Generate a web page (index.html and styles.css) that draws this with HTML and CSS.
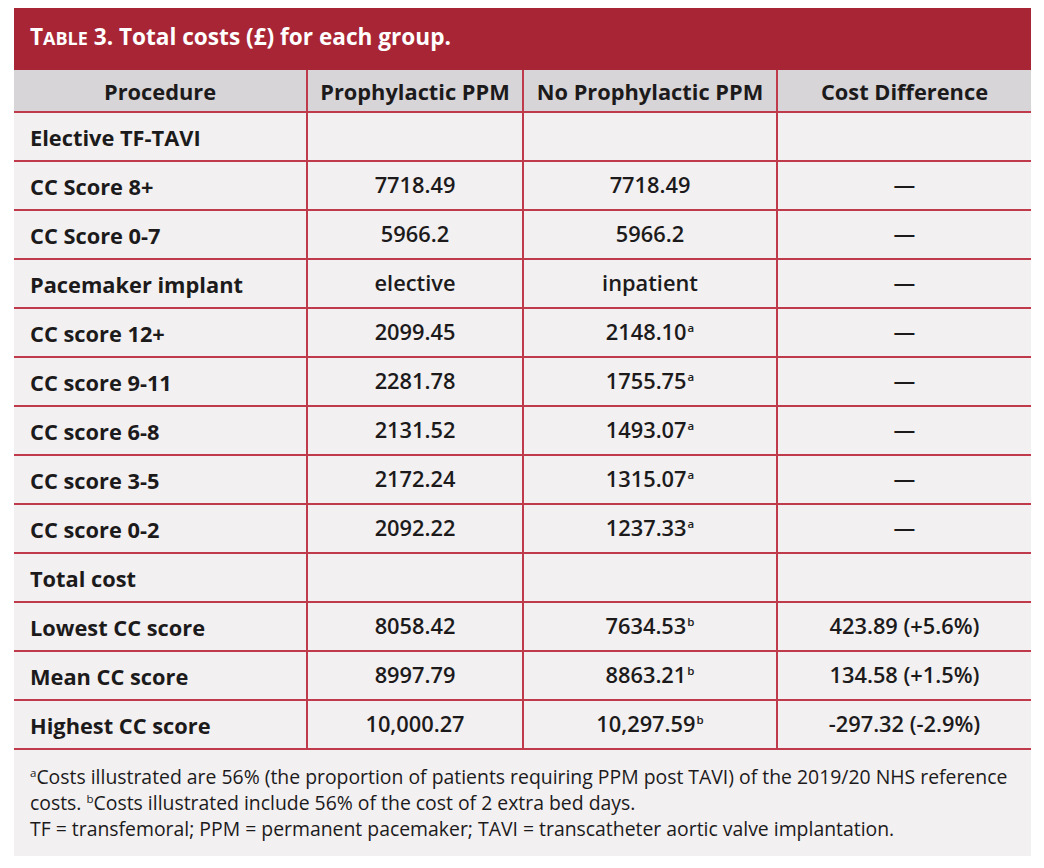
FILE: index.html
```html
<!DOCTYPE html>
<html lang="en">
<head>
<meta charset="utf-8">
<title>Table 3. Total costs</title>
<link rel="stylesheet" href="styles.css">
</head>
<body>
<div class="card">
  <div class="caption"><span class="cap">T</span><span class="sc">able</span> 3. Total costs (£) for each group.</div>
  <table class="costs">
    <colgroup>
      <col class="c1"><col class="c2"><col class="c3"><col class="c4">
    </colgroup>
    <thead>
      <tr><th>Procedure</th><th>Prophylactic PPM</th><th>No Prophylactic PPM</th><th>Cost Difference</th></tr>
    </thead>
    <tbody>
      <tr><td class="lbl">Elective TF-TAVI</td><td></td><td></td><td></td></tr>
      <tr><td class="lbl">CC Score 8+</td><td>7718.49</td><td>7718.49</td><td>—</td></tr>
      <tr><td class="lbl">CC Score 0-7</td><td>5966.2</td><td>5966.2</td><td>—</td></tr>
      <tr><td class="lbl">Pacemaker implant</td><td>elective</td><td>inpatient</td><td>—</td></tr>
      <tr><td class="lbl">CC score 12+</td><td>2099.45</td><td>2148.10<sup>a</sup></td><td>—</td></tr>
      <tr><td class="lbl">CC score 9-11</td><td>2281.78</td><td>1755.75<sup>a</sup></td><td>—</td></tr>
      <tr><td class="lbl">CC score 6-8</td><td>2131.52</td><td>1493.07<sup>a</sup></td><td>—</td></tr>
      <tr><td class="lbl">CC score 3-5</td><td>2172.24</td><td>1315.07<sup>a</sup></td><td>—</td></tr>
      <tr><td class="lbl">CC score 0-2</td><td>2092.22</td><td>1237.33<sup>a</sup></td><td>—</td></tr>
      <tr><td class="lbl">Total cost</td><td></td><td></td><td></td></tr>
      <tr><td class="lbl">Lowest CC score</td><td>8058.42</td><td>7634.53<sup>b</sup></td><td>423.89 (+5.6%)</td></tr>
      <tr><td class="lbl">Mean CC score</td><td>8997.79</td><td>8863.21<sup>b</sup></td><td>134.58 (+1.5%)</td></tr>
      <tr><td class="lbl">Highest CC score</td><td>10,000.27</td><td>10,297.59<sup>b</sup></td><td>-297.32 (-2.9%)</td></tr>
    </tbody>
  </table>
  <div class="notes">
    <p class="line"><sup>a</sup>Costs illustrated are 56% (the proportion of patients requiring PPM post TAVI) of the 2019/20 NHS reference</p>
    <p class="line">costs. <sup>b</sup>Costs illustrated include 56% of the cost of 2 extra bed days.</p>
    <p class="line">TF = transfemoral; PPM = permanent pacemaker; TAVI = transcatheter aortic valve implantation.</p>
  </div>
</div>
</body>
</html>
```

FILE: styles.css
```css
html, body {
  margin: 0;
  padding: 0;
  background: #ffffff;
}

body {
  padding: 8px 13px 14px 14px;
  font-family: "Open Sans", Lato, sans-serif;
  color: #1c1a1b;
}

.card {
  width: 1017px;
  background: #f2f0f1;
}

.caption {
  height: 62px;
  box-sizing: border-box;
  padding: 14px 16px 0 16px;
  background: #a82535;
  color: #ffffff;
  font-weight: 700;
  font-size: 22.6px;
  line-height: 30px;
}

.caption .sc {
  text-transform: uppercase;
  font-size: 18px;
}

.costs {
  width: 100%;
  table-layout: fixed;
  border-collapse: collapse;
}

.c1 { width: 293px; }
.c2 { width: 216px; }
.c3 { width: 254px; }
.c4 { width: 254px; }

.costs th,
.costs td {
  padding: 0 0 2px 0;
  text-align: center;
  vertical-align: middle;
  font-size: 21.8px;
  line-height: 30px;
  border-bottom: 2px solid #bf3a4a;
  border-left: 2px solid #bf3a4a;
}

.costs th:first-child,
.costs td:first-child {
  border-left: none;
}

.costs th {
  height: 38px;
  background: #d7d5d8;
  font-weight: 700;
  padding: 3px 0 0 0;
}

.costs td {
  height: 45px;
  font-weight: 600;
}

.costs td.lbl {
  text-align: left;
  padding: 3px 0 0 16px;
  height: 44px;
  font-weight: 700;
}

.costs sup {
  font-size: 11.5px;
  vertical-align: 8px;
  line-height: 0;
  margin-left: 1px;
  font-weight: 600;
}

.notes {
  padding: 14px 8px 14px 16px;
  font-size: 19.4px;
  line-height: 26px;
}

.notes .line {
  margin: 0;
  white-space: nowrap;
}

.notes sup {
  font-size: 11.5px;
  vertical-align: 7px;
  line-height: 0;
}
```
